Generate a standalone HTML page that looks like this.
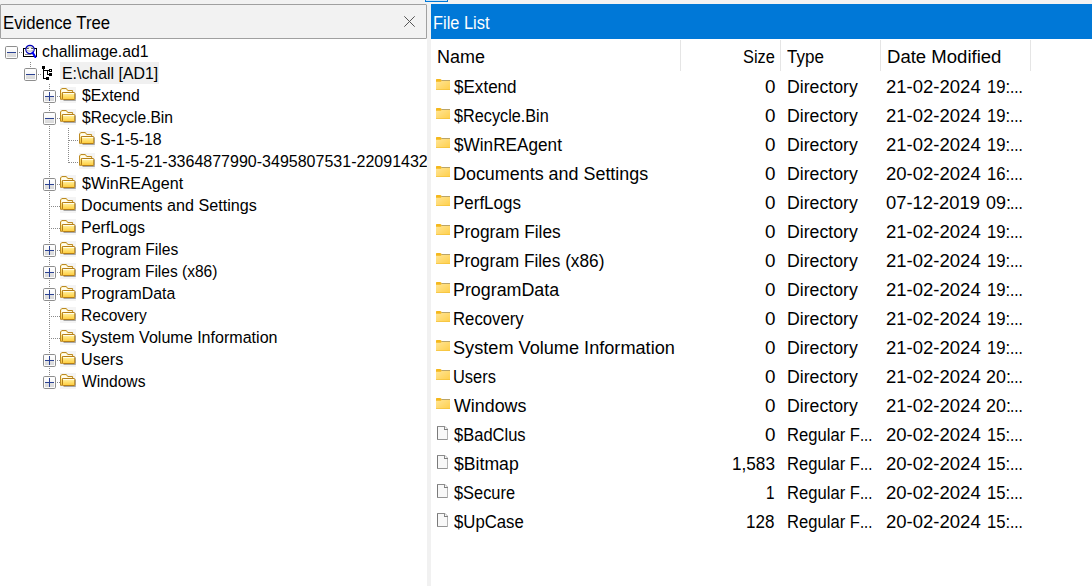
<!DOCTYPE html>
<html><head><meta charset="utf-8"><title>FTK Imager</title><style>
html,body{margin:0;padding:0}
body{width:1092px;height:586px;overflow:hidden;background:#fff;position:relative;font-family:"Liberation Sans",sans-serif}
.a{position:absolute;display:block}
.t{position:absolute;white-space:pre;line-height:24px;transform-origin:0 0}
.vd{width:1px;background:repeating-linear-gradient(to bottom,#8a8a8a 0,#8a8a8a 1px,transparent 1px,transparent 2px)}
.hd{height:1px;background:repeating-linear-gradient(to right,#8a8a8a 0,#8a8a8a 1px,transparent 1px,transparent 2px)}
.clip{position:absolute;left:0;top:0;width:427px;height:586px;overflow:hidden}
</style></head>
<body>
<svg width="0" height="0" style="position:absolute"><defs><linearGradient id="bg" x1="0" y1="0" x2="0" y2="1"><stop offset="0" stop-color="#ffffff"/><stop offset="0.5" stop-color="#f4f4f4"/><stop offset="0.5" stop-color="#e2e2e2"/><stop offset="1" stop-color="#d9d9d9"/></linearGradient><linearGradient id="fg" x1="0" y1="0" x2="0" y2="1"><stop offset="0" stop-color="#fff8c8"/><stop offset="0.3" stop-color="#ffe98a"/><stop offset="1" stop-color="#ffcb38"/></linearGradient><linearGradient id="bk" x1="0" y1="0" x2="0" y2="1"><stop offset="0" stop-color="#fff3b0"/><stop offset="1" stop-color="#f7c638"/></linearGradient><linearGradient id="lf" x1="0" y1="0" x2="1" y2="1"><stop offset="0" stop-color="#ffe596"/><stop offset="1" stop-color="#ffcf4a"/></linearGradient></defs></svg>
<div class="a" style="left:0;top:0;width:1092px;height:4px;background:#f2f2f2"></div>
<div class="a" style="left:425px;top:-6px;width:21px;height:6px;border:1px solid #0078d7;background:#cce4f7"></div>
<div class="a" style="left:0;top:4px;width:425px;height:33px;border:1px solid #a0a0a0;border-radius:1px;background:#f2f2f2"></div>
<div class="a" style="left:427px;top:4px;width:4px;height:582px;background:#f1f1f1"></div>
<svg class="a" style="left:404px;top:16px" width="11" height="11" viewBox="0 0 11 11"><path d="M0.3,0.3 L10.7,10.7 M10.7,0.3 L0.3,10.7" stroke="#555" stroke-width="1" fill="none"/></svg>
<div class="a" style="left:431px;top:4px;width:661px;height:35px;background:#0078d7"></div>
<div class="a" style="left:680px;top:40px;width:1px;height:31px;background:#e5e5e5"></div>
<div class="a" style="left:780px;top:40px;width:1px;height:31px;background:#e5e5e5"></div>
<div class="a" style="left:880px;top:40px;width:1px;height:31px;background:#e5e5e5"></div>
<div class="a" style="left:1030px;top:40px;width:1px;height:31px;background:#e5e5e5"></div>
<div class="a" style="left:60px;top:62px;width:99px;height:22px;background:#f0f0f0"></div>
<div class="a hd" style="left:19px;top:52px;width:3px"></div>
<div class="a vd" style="left:30px;top:62px;height:5px"></div>
<div class="a hd" style="left:38px;top:74px;width:3px"></div>
<div class="a vd" style="left:49px;top:84px;height:293px"></div>
<div class="a vd" style="left:68px;top:128px;height:35px"></div>
<div class="a hd" style="left:57px;top:96px;width:3px"></div>
<svg class="a" style="left:60px;top:87px" width="16" height="16" viewBox="0 0 16 16"><rect width="16" height="16" fill="#f4f4f4"/><path d="M3,6.5 H15.9 V13.3 Q15.9,13.9 15.3,13.9 H3.6 Z" fill="#5a5a5a" opacity="0.5"/><path d="M0.5,12.3 V3 L1.8,1.5 H6.3 L7.8,3.5 H12.6 V5.5 H2.5 V12.3 Z" fill="url(#bk)" stroke="#bd8a22" stroke-linejoin="round"/><path d="M1.4,3.2 L2.2,2.4 H5.9 L7.3,4.3 H11.8 V5 H2 V6 H1.4 Z" fill="#fffdf2"/><rect x="2.5" y="5.5" width="12.3" height="7" rx="0.8" fill="url(#fg)" stroke="#b67f17"/><rect x="3.2" y="6.1" width="10.9" height="0.9" fill="#fffef0"/></svg>
<svg class="a" style="left:43px;top:90px" width="13" height="13" viewBox="0 0 13 13"><rect x="0.5" y="0.5" width="12" height="12" rx="1.2" fill="#fcfcfc" stroke="#8e8e8e"/><rect x="2" y="2" width="9" height="9" fill="url(#bg)"/><rect x="2" y="6" width="9" height="1" fill="#2b4293"/><rect x="6" y="2" width="1" height="9" fill="#2b4293"/></svg>
<div class="a hd" style="left:57px;top:118px;width:3px"></div>
<svg class="a" style="left:60px;top:109px" width="16" height="16" viewBox="0 0 16 16"><rect width="16" height="16" fill="#f4f4f4"/><path d="M3,6.5 H15.9 V13.3 Q15.9,13.9 15.3,13.9 H3.6 Z" fill="#5a5a5a" opacity="0.5"/><path d="M0.5,12.3 V3 L1.8,1.5 H6.3 L7.8,3.5 H12.6 V5.5 H2.5 V12.3 Z" fill="url(#bk)" stroke="#bd8a22" stroke-linejoin="round"/><path d="M1.4,3.2 L2.2,2.4 H5.9 L7.3,4.3 H11.8 V5 H2 V6 H1.4 Z" fill="#fffdf2"/><rect x="2.5" y="5.5" width="12.3" height="7" rx="0.8" fill="url(#fg)" stroke="#b67f17"/><rect x="3.2" y="6.1" width="10.9" height="0.9" fill="#fffef0"/></svg>
<svg class="a" style="left:43px;top:112px" width="13" height="13" viewBox="0 0 13 13"><rect x="0.5" y="0.5" width="12" height="12" rx="1.2" fill="#fcfcfc" stroke="#8e8e8e"/><rect x="2" y="2" width="9" height="9" fill="url(#bg)"/><rect x="2" y="6" width="9" height="1" fill="#2b4293"/></svg>
<div class="a hd" style="left:69px;top:140px;width:9px"></div>
<svg class="a" style="left:79px;top:131px" width="16" height="16" viewBox="0 0 16 16"><rect width="16" height="16" fill="#f4f4f4"/><path d="M3,6.5 H15.9 V13.3 Q15.9,13.9 15.3,13.9 H3.6 Z" fill="#5a5a5a" opacity="0.5"/><path d="M0.5,12.3 V3 L1.8,1.5 H6.3 L7.8,3.5 H12.6 V5.5 H2.5 V12.3 Z" fill="url(#bk)" stroke="#bd8a22" stroke-linejoin="round"/><path d="M1.4,3.2 L2.2,2.4 H5.9 L7.3,4.3 H11.8 V5 H2 V6 H1.4 Z" fill="#fffdf2"/><rect x="2.5" y="5.5" width="12.3" height="7" rx="0.8" fill="url(#fg)" stroke="#b67f17"/><rect x="3.2" y="6.1" width="10.9" height="0.9" fill="#fffef0"/></svg>
<div class="a hd" style="left:69px;top:162px;width:9px"></div>
<svg class="a" style="left:79px;top:153px" width="16" height="16" viewBox="0 0 16 16"><rect width="16" height="16" fill="#f4f4f4"/><path d="M3,6.5 H15.9 V13.3 Q15.9,13.9 15.3,13.9 H3.6 Z" fill="#5a5a5a" opacity="0.5"/><path d="M0.5,12.3 V3 L1.8,1.5 H6.3 L7.8,3.5 H12.6 V5.5 H2.5 V12.3 Z" fill="url(#bk)" stroke="#bd8a22" stroke-linejoin="round"/><path d="M1.4,3.2 L2.2,2.4 H5.9 L7.3,4.3 H11.8 V5 H2 V6 H1.4 Z" fill="#fffdf2"/><rect x="2.5" y="5.5" width="12.3" height="7" rx="0.8" fill="url(#fg)" stroke="#b67f17"/><rect x="3.2" y="6.1" width="10.9" height="0.9" fill="#fffef0"/></svg>
<div class="a hd" style="left:57px;top:184px;width:3px"></div>
<svg class="a" style="left:60px;top:175px" width="16" height="16" viewBox="0 0 16 16"><rect width="16" height="16" fill="#f4f4f4"/><path d="M3,6.5 H15.9 V13.3 Q15.9,13.9 15.3,13.9 H3.6 Z" fill="#5a5a5a" opacity="0.5"/><path d="M0.5,12.3 V3 L1.8,1.5 H6.3 L7.8,3.5 H12.6 V5.5 H2.5 V12.3 Z" fill="url(#bk)" stroke="#bd8a22" stroke-linejoin="round"/><path d="M1.4,3.2 L2.2,2.4 H5.9 L7.3,4.3 H11.8 V5 H2 V6 H1.4 Z" fill="#fffdf2"/><rect x="2.5" y="5.5" width="12.3" height="7" rx="0.8" fill="url(#fg)" stroke="#b67f17"/><rect x="3.2" y="6.1" width="10.9" height="0.9" fill="#fffef0"/></svg>
<svg class="a" style="left:43px;top:178px" width="13" height="13" viewBox="0 0 13 13"><rect x="0.5" y="0.5" width="12" height="12" rx="1.2" fill="#fcfcfc" stroke="#8e8e8e"/><rect x="2" y="2" width="9" height="9" fill="url(#bg)"/><rect x="2" y="6" width="9" height="1" fill="#2b4293"/><rect x="6" y="2" width="1" height="9" fill="#2b4293"/></svg>
<div class="a hd" style="left:51px;top:206px;width:9px"></div>
<svg class="a" style="left:60px;top:197px" width="16" height="16" viewBox="0 0 16 16"><rect width="16" height="16" fill="#f4f4f4"/><path d="M3,6.5 H15.9 V13.3 Q15.9,13.9 15.3,13.9 H3.6 Z" fill="#5a5a5a" opacity="0.5"/><path d="M0.5,12.3 V3 L1.8,1.5 H6.3 L7.8,3.5 H12.6 V5.5 H2.5 V12.3 Z" fill="url(#bk)" stroke="#bd8a22" stroke-linejoin="round"/><path d="M1.4,3.2 L2.2,2.4 H5.9 L7.3,4.3 H11.8 V5 H2 V6 H1.4 Z" fill="#fffdf2"/><rect x="2.5" y="5.5" width="12.3" height="7" rx="0.8" fill="url(#fg)" stroke="#b67f17"/><rect x="3.2" y="6.1" width="10.9" height="0.9" fill="#fffef0"/></svg>
<div class="a hd" style="left:51px;top:228px;width:9px"></div>
<svg class="a" style="left:60px;top:219px" width="16" height="16" viewBox="0 0 16 16"><rect width="16" height="16" fill="#f4f4f4"/><path d="M3,6.5 H15.9 V13.3 Q15.9,13.9 15.3,13.9 H3.6 Z" fill="#5a5a5a" opacity="0.5"/><path d="M0.5,12.3 V3 L1.8,1.5 H6.3 L7.8,3.5 H12.6 V5.5 H2.5 V12.3 Z" fill="url(#bk)" stroke="#bd8a22" stroke-linejoin="round"/><path d="M1.4,3.2 L2.2,2.4 H5.9 L7.3,4.3 H11.8 V5 H2 V6 H1.4 Z" fill="#fffdf2"/><rect x="2.5" y="5.5" width="12.3" height="7" rx="0.8" fill="url(#fg)" stroke="#b67f17"/><rect x="3.2" y="6.1" width="10.9" height="0.9" fill="#fffef0"/></svg>
<div class="a hd" style="left:57px;top:250px;width:3px"></div>
<svg class="a" style="left:60px;top:241px" width="16" height="16" viewBox="0 0 16 16"><rect width="16" height="16" fill="#f4f4f4"/><path d="M3,6.5 H15.9 V13.3 Q15.9,13.9 15.3,13.9 H3.6 Z" fill="#5a5a5a" opacity="0.5"/><path d="M0.5,12.3 V3 L1.8,1.5 H6.3 L7.8,3.5 H12.6 V5.5 H2.5 V12.3 Z" fill="url(#bk)" stroke="#bd8a22" stroke-linejoin="round"/><path d="M1.4,3.2 L2.2,2.4 H5.9 L7.3,4.3 H11.8 V5 H2 V6 H1.4 Z" fill="#fffdf2"/><rect x="2.5" y="5.5" width="12.3" height="7" rx="0.8" fill="url(#fg)" stroke="#b67f17"/><rect x="3.2" y="6.1" width="10.9" height="0.9" fill="#fffef0"/></svg>
<svg class="a" style="left:43px;top:244px" width="13" height="13" viewBox="0 0 13 13"><rect x="0.5" y="0.5" width="12" height="12" rx="1.2" fill="#fcfcfc" stroke="#8e8e8e"/><rect x="2" y="2" width="9" height="9" fill="url(#bg)"/><rect x="2" y="6" width="9" height="1" fill="#2b4293"/><rect x="6" y="2" width="1" height="9" fill="#2b4293"/></svg>
<div class="a hd" style="left:57px;top:272px;width:3px"></div>
<svg class="a" style="left:60px;top:263px" width="16" height="16" viewBox="0 0 16 16"><rect width="16" height="16" fill="#f4f4f4"/><path d="M3,6.5 H15.9 V13.3 Q15.9,13.9 15.3,13.9 H3.6 Z" fill="#5a5a5a" opacity="0.5"/><path d="M0.5,12.3 V3 L1.8,1.5 H6.3 L7.8,3.5 H12.6 V5.5 H2.5 V12.3 Z" fill="url(#bk)" stroke="#bd8a22" stroke-linejoin="round"/><path d="M1.4,3.2 L2.2,2.4 H5.9 L7.3,4.3 H11.8 V5 H2 V6 H1.4 Z" fill="#fffdf2"/><rect x="2.5" y="5.5" width="12.3" height="7" rx="0.8" fill="url(#fg)" stroke="#b67f17"/><rect x="3.2" y="6.1" width="10.9" height="0.9" fill="#fffef0"/></svg>
<svg class="a" style="left:43px;top:266px" width="13" height="13" viewBox="0 0 13 13"><rect x="0.5" y="0.5" width="12" height="12" rx="1.2" fill="#fcfcfc" stroke="#8e8e8e"/><rect x="2" y="2" width="9" height="9" fill="url(#bg)"/><rect x="2" y="6" width="9" height="1" fill="#2b4293"/><rect x="6" y="2" width="1" height="9" fill="#2b4293"/></svg>
<div class="a hd" style="left:57px;top:294px;width:3px"></div>
<svg class="a" style="left:60px;top:285px" width="16" height="16" viewBox="0 0 16 16"><rect width="16" height="16" fill="#f4f4f4"/><path d="M3,6.5 H15.9 V13.3 Q15.9,13.9 15.3,13.9 H3.6 Z" fill="#5a5a5a" opacity="0.5"/><path d="M0.5,12.3 V3 L1.8,1.5 H6.3 L7.8,3.5 H12.6 V5.5 H2.5 V12.3 Z" fill="url(#bk)" stroke="#bd8a22" stroke-linejoin="round"/><path d="M1.4,3.2 L2.2,2.4 H5.9 L7.3,4.3 H11.8 V5 H2 V6 H1.4 Z" fill="#fffdf2"/><rect x="2.5" y="5.5" width="12.3" height="7" rx="0.8" fill="url(#fg)" stroke="#b67f17"/><rect x="3.2" y="6.1" width="10.9" height="0.9" fill="#fffef0"/></svg>
<svg class="a" style="left:43px;top:288px" width="13" height="13" viewBox="0 0 13 13"><rect x="0.5" y="0.5" width="12" height="12" rx="1.2" fill="#fcfcfc" stroke="#8e8e8e"/><rect x="2" y="2" width="9" height="9" fill="url(#bg)"/><rect x="2" y="6" width="9" height="1" fill="#2b4293"/><rect x="6" y="2" width="1" height="9" fill="#2b4293"/></svg>
<div class="a hd" style="left:51px;top:316px;width:9px"></div>
<svg class="a" style="left:60px;top:307px" width="16" height="16" viewBox="0 0 16 16"><rect width="16" height="16" fill="#f4f4f4"/><path d="M3,6.5 H15.9 V13.3 Q15.9,13.9 15.3,13.9 H3.6 Z" fill="#5a5a5a" opacity="0.5"/><path d="M0.5,12.3 V3 L1.8,1.5 H6.3 L7.8,3.5 H12.6 V5.5 H2.5 V12.3 Z" fill="url(#bk)" stroke="#bd8a22" stroke-linejoin="round"/><path d="M1.4,3.2 L2.2,2.4 H5.9 L7.3,4.3 H11.8 V5 H2 V6 H1.4 Z" fill="#fffdf2"/><rect x="2.5" y="5.5" width="12.3" height="7" rx="0.8" fill="url(#fg)" stroke="#b67f17"/><rect x="3.2" y="6.1" width="10.9" height="0.9" fill="#fffef0"/></svg>
<div class="a hd" style="left:51px;top:338px;width:9px"></div>
<svg class="a" style="left:60px;top:329px" width="16" height="16" viewBox="0 0 16 16"><rect width="16" height="16" fill="#f4f4f4"/><path d="M3,6.5 H15.9 V13.3 Q15.9,13.9 15.3,13.9 H3.6 Z" fill="#5a5a5a" opacity="0.5"/><path d="M0.5,12.3 V3 L1.8,1.5 H6.3 L7.8,3.5 H12.6 V5.5 H2.5 V12.3 Z" fill="url(#bk)" stroke="#bd8a22" stroke-linejoin="round"/><path d="M1.4,3.2 L2.2,2.4 H5.9 L7.3,4.3 H11.8 V5 H2 V6 H1.4 Z" fill="#fffdf2"/><rect x="2.5" y="5.5" width="12.3" height="7" rx="0.8" fill="url(#fg)" stroke="#b67f17"/><rect x="3.2" y="6.1" width="10.9" height="0.9" fill="#fffef0"/></svg>
<div class="a hd" style="left:57px;top:360px;width:3px"></div>
<svg class="a" style="left:60px;top:351px" width="16" height="16" viewBox="0 0 16 16"><rect width="16" height="16" fill="#f4f4f4"/><path d="M3,6.5 H15.9 V13.3 Q15.9,13.9 15.3,13.9 H3.6 Z" fill="#5a5a5a" opacity="0.5"/><path d="M0.5,12.3 V3 L1.8,1.5 H6.3 L7.8,3.5 H12.6 V5.5 H2.5 V12.3 Z" fill="url(#bk)" stroke="#bd8a22" stroke-linejoin="round"/><path d="M1.4,3.2 L2.2,2.4 H5.9 L7.3,4.3 H11.8 V5 H2 V6 H1.4 Z" fill="#fffdf2"/><rect x="2.5" y="5.5" width="12.3" height="7" rx="0.8" fill="url(#fg)" stroke="#b67f17"/><rect x="3.2" y="6.1" width="10.9" height="0.9" fill="#fffef0"/></svg>
<svg class="a" style="left:43px;top:354px" width="13" height="13" viewBox="0 0 13 13"><rect x="0.5" y="0.5" width="12" height="12" rx="1.2" fill="#fcfcfc" stroke="#8e8e8e"/><rect x="2" y="2" width="9" height="9" fill="url(#bg)"/><rect x="2" y="6" width="9" height="1" fill="#2b4293"/><rect x="6" y="2" width="1" height="9" fill="#2b4293"/></svg>
<div class="a hd" style="left:57px;top:382px;width:3px"></div>
<svg class="a" style="left:60px;top:373px" width="16" height="16" viewBox="0 0 16 16"><rect width="16" height="16" fill="#f4f4f4"/><path d="M3,6.5 H15.9 V13.3 Q15.9,13.9 15.3,13.9 H3.6 Z" fill="#5a5a5a" opacity="0.5"/><path d="M0.5,12.3 V3 L1.8,1.5 H6.3 L7.8,3.5 H12.6 V5.5 H2.5 V12.3 Z" fill="url(#bk)" stroke="#bd8a22" stroke-linejoin="round"/><path d="M1.4,3.2 L2.2,2.4 H5.9 L7.3,4.3 H11.8 V5 H2 V6 H1.4 Z" fill="#fffdf2"/><rect x="2.5" y="5.5" width="12.3" height="7" rx="0.8" fill="url(#fg)" stroke="#b67f17"/><rect x="3.2" y="6.1" width="10.9" height="0.9" fill="#fffef0"/></svg>
<svg class="a" style="left:43px;top:376px" width="13" height="13" viewBox="0 0 13 13"><rect x="0.5" y="0.5" width="12" height="12" rx="1.2" fill="#fcfcfc" stroke="#8e8e8e"/><rect x="2" y="2" width="9" height="9" fill="url(#bg)"/><rect x="2" y="6" width="9" height="1" fill="#2b4293"/><rect x="6" y="2" width="1" height="9" fill="#2b4293"/></svg>
<svg class="a" style="left:5px;top:46px" width="13" height="13" viewBox="0 0 13 13"><rect x="0.5" y="0.5" width="12" height="12" rx="1.2" fill="#fcfcfc" stroke="#8e8e8e"/><rect x="2" y="2" width="9" height="9" fill="url(#bg)"/><rect x="2" y="6" width="9" height="1" fill="#2b4293"/></svg>
<svg class="a" style="left:24px;top:68px" width="13" height="13" viewBox="0 0 13 13"><rect x="0.5" y="0.5" width="12" height="12" rx="1.2" fill="#fcfcfc" stroke="#8e8e8e"/><rect x="2" y="2" width="9" height="9" fill="url(#bg)"/><rect x="2" y="6" width="9" height="1" fill="#2b4293"/></svg>
<svg class="a" style="left:23px;top:44px" width="16" height="16" viewBox="0 0 16 16"><rect x="0.5" y="4.5" width="13" height="8" fill="#fff" stroke="#000"/><rect x="2" y="10" width="6.5" height="1" fill="#8a8a8a"/><circle cx="7" cy="5.5" r="4.2" fill="#fff" stroke="#0000b8" stroke-width="1.2"/><path d="M3.8,4.4 H5.8 M8.2,4.4 H10.2" stroke="#222" stroke-width="0.9" fill="none"/><path d="M4.4,3.6 Q7,1.9 9.6,3.6" fill="none" stroke="#b0b0a0" stroke-width="0.8"/><path d="M4,6.6 Q7,7.8 10,6.6" fill="none" stroke="#9a9a9a" stroke-width="0.8"/><path d="M9.6,8.6 L12.3,13" stroke="#0000f0" stroke-width="2.1" stroke-linecap="round"/></svg>
<svg class="a" style="left:42px;top:66px" width="11" height="15" viewBox="0 0 11 15" shape-rendering="crispEdges"><rect x="0" y="0" width="3" height="3" fill="#000"/><rect x="1" y="3" width="1" height="10" fill="#000"/><rect x="1" y="12" width="3" height="1" fill="#000"/><rect x="4" y="11" width="3" height="3" fill="#000"/><rect x="2" y="4" width="5" height="1" fill="#000"/><rect x="5" y="4" width="1" height="5" fill="#000"/><rect x="5" y="8" width="2" height="1" fill="#000"/><rect x="7" y="3" width="3" height="3" fill="#000"/><rect x="7" y="7" width="3" height="3" fill="#000"/><rect x="8" y="4" width="1" height="1" fill="#fff"/></svg>
<svg class="a" style="left:436px;top:79px" width="14" height="11" viewBox="0 0 14 11"><rect x="5.2" y="1" width="8.8" height="1" fill="#b9a469"/><rect x="0" y="2" width="14" height="9" fill="url(#lf)"/><rect x="0" y="10.4" width="14" height="0.6" fill="#f2be35"/><path d="M0,0.6 Q0,0 0.6,0 H4.3 Q4.8,0 5.1,0.5 L5.5,1.4 Q5.5,2.8 4.6,2.8 H0 Z" fill="#f5b81c"/></svg>
<svg class="a" style="left:436px;top:108px" width="14" height="11" viewBox="0 0 14 11"><rect x="5.2" y="1" width="8.8" height="1" fill="#b9a469"/><rect x="0" y="2" width="14" height="9" fill="url(#lf)"/><rect x="0" y="10.4" width="14" height="0.6" fill="#f2be35"/><path d="M0,0.6 Q0,0 0.6,0 H4.3 Q4.8,0 5.1,0.5 L5.5,1.4 Q5.5,2.8 4.6,2.8 H0 Z" fill="#f5b81c"/></svg>
<svg class="a" style="left:436px;top:137px" width="14" height="11" viewBox="0 0 14 11"><rect x="5.2" y="1" width="8.8" height="1" fill="#b9a469"/><rect x="0" y="2" width="14" height="9" fill="url(#lf)"/><rect x="0" y="10.4" width="14" height="0.6" fill="#f2be35"/><path d="M0,0.6 Q0,0 0.6,0 H4.3 Q4.8,0 5.1,0.5 L5.5,1.4 Q5.5,2.8 4.6,2.8 H0 Z" fill="#f5b81c"/></svg>
<svg class="a" style="left:436px;top:166px" width="14" height="11" viewBox="0 0 14 11"><rect x="5.2" y="1" width="8.8" height="1" fill="#b9a469"/><rect x="0" y="2" width="14" height="9" fill="url(#lf)"/><rect x="0" y="10.4" width="14" height="0.6" fill="#f2be35"/><path d="M0,0.6 Q0,0 0.6,0 H4.3 Q4.8,0 5.1,0.5 L5.5,1.4 Q5.5,2.8 4.6,2.8 H0 Z" fill="#f5b81c"/></svg>
<svg class="a" style="left:436px;top:195px" width="14" height="11" viewBox="0 0 14 11"><rect x="5.2" y="1" width="8.8" height="1" fill="#b9a469"/><rect x="0" y="2" width="14" height="9" fill="url(#lf)"/><rect x="0" y="10.4" width="14" height="0.6" fill="#f2be35"/><path d="M0,0.6 Q0,0 0.6,0 H4.3 Q4.8,0 5.1,0.5 L5.5,1.4 Q5.5,2.8 4.6,2.8 H0 Z" fill="#f5b81c"/></svg>
<svg class="a" style="left:436px;top:224px" width="14" height="11" viewBox="0 0 14 11"><rect x="5.2" y="1" width="8.8" height="1" fill="#b9a469"/><rect x="0" y="2" width="14" height="9" fill="url(#lf)"/><rect x="0" y="10.4" width="14" height="0.6" fill="#f2be35"/><path d="M0,0.6 Q0,0 0.6,0 H4.3 Q4.8,0 5.1,0.5 L5.5,1.4 Q5.5,2.8 4.6,2.8 H0 Z" fill="#f5b81c"/></svg>
<svg class="a" style="left:436px;top:253px" width="14" height="11" viewBox="0 0 14 11"><rect x="5.2" y="1" width="8.8" height="1" fill="#b9a469"/><rect x="0" y="2" width="14" height="9" fill="url(#lf)"/><rect x="0" y="10.4" width="14" height="0.6" fill="#f2be35"/><path d="M0,0.6 Q0,0 0.6,0 H4.3 Q4.8,0 5.1,0.5 L5.5,1.4 Q5.5,2.8 4.6,2.8 H0 Z" fill="#f5b81c"/></svg>
<svg class="a" style="left:436px;top:282px" width="14" height="11" viewBox="0 0 14 11"><rect x="5.2" y="1" width="8.8" height="1" fill="#b9a469"/><rect x="0" y="2" width="14" height="9" fill="url(#lf)"/><rect x="0" y="10.4" width="14" height="0.6" fill="#f2be35"/><path d="M0,0.6 Q0,0 0.6,0 H4.3 Q4.8,0 5.1,0.5 L5.5,1.4 Q5.5,2.8 4.6,2.8 H0 Z" fill="#f5b81c"/></svg>
<svg class="a" style="left:436px;top:311px" width="14" height="11" viewBox="0 0 14 11"><rect x="5.2" y="1" width="8.8" height="1" fill="#b9a469"/><rect x="0" y="2" width="14" height="9" fill="url(#lf)"/><rect x="0" y="10.4" width="14" height="0.6" fill="#f2be35"/><path d="M0,0.6 Q0,0 0.6,0 H4.3 Q4.8,0 5.1,0.5 L5.5,1.4 Q5.5,2.8 4.6,2.8 H0 Z" fill="#f5b81c"/></svg>
<svg class="a" style="left:436px;top:340px" width="14" height="11" viewBox="0 0 14 11"><rect x="5.2" y="1" width="8.8" height="1" fill="#b9a469"/><rect x="0" y="2" width="14" height="9" fill="url(#lf)"/><rect x="0" y="10.4" width="14" height="0.6" fill="#f2be35"/><path d="M0,0.6 Q0,0 0.6,0 H4.3 Q4.8,0 5.1,0.5 L5.5,1.4 Q5.5,2.8 4.6,2.8 H0 Z" fill="#f5b81c"/></svg>
<svg class="a" style="left:436px;top:369px" width="14" height="11" viewBox="0 0 14 11"><rect x="5.2" y="1" width="8.8" height="1" fill="#b9a469"/><rect x="0" y="2" width="14" height="9" fill="url(#lf)"/><rect x="0" y="10.4" width="14" height="0.6" fill="#f2be35"/><path d="M0,0.6 Q0,0 0.6,0 H4.3 Q4.8,0 5.1,0.5 L5.5,1.4 Q5.5,2.8 4.6,2.8 H0 Z" fill="#f5b81c"/></svg>
<svg class="a" style="left:436px;top:398px" width="14" height="11" viewBox="0 0 14 11"><rect x="5.2" y="1" width="8.8" height="1" fill="#b9a469"/><rect x="0" y="2" width="14" height="9" fill="url(#lf)"/><rect x="0" y="10.4" width="14" height="0.6" fill="#f2be35"/><path d="M0,0.6 Q0,0 0.6,0 H4.3 Q4.8,0 5.1,0.5 L5.5,1.4 Q5.5,2.8 4.6,2.8 H0 Z" fill="#f5b81c"/></svg>
<svg class="a" style="left:437px;top:426px" width="11" height="14" viewBox="0 0 11 14"><path d="M0,0 H8 L11,3 V14 H0 Z" fill="#f8f8f8"/><path d="M8,0 L11,3.4 H8 Z" fill="#fdfdfd"/><rect x="0" y="0" width="1" height="14" fill="#7a7a7a"/><rect x="0" y="0" width="8" height="1" fill="#8c8c8c"/><rect x="0" y="13" width="11" height="1" fill="#949494"/><rect x="10" y="3.5" width="1" height="10.5" fill="#b4b4b4"/><rect x="7" y="0" width="1" height="4" fill="#8a8a8a"/><rect x="7" y="3" width="4" height="1" fill="#7e7e7e"/><path d="M8,0.4 L10.7,3.2" stroke="#a8a8a8" stroke-width="0.9" fill="none"/></svg>
<svg class="a" style="left:437px;top:455px" width="11" height="14" viewBox="0 0 11 14"><path d="M0,0 H8 L11,3 V14 H0 Z" fill="#f8f8f8"/><path d="M8,0 L11,3.4 H8 Z" fill="#fdfdfd"/><rect x="0" y="0" width="1" height="14" fill="#7a7a7a"/><rect x="0" y="0" width="8" height="1" fill="#8c8c8c"/><rect x="0" y="13" width="11" height="1" fill="#949494"/><rect x="10" y="3.5" width="1" height="10.5" fill="#b4b4b4"/><rect x="7" y="0" width="1" height="4" fill="#8a8a8a"/><rect x="7" y="3" width="4" height="1" fill="#7e7e7e"/><path d="M8,0.4 L10.7,3.2" stroke="#a8a8a8" stroke-width="0.9" fill="none"/></svg>
<svg class="a" style="left:437px;top:484px" width="11" height="14" viewBox="0 0 11 14"><path d="M0,0 H8 L11,3 V14 H0 Z" fill="#f8f8f8"/><path d="M8,0 L11,3.4 H8 Z" fill="#fdfdfd"/><rect x="0" y="0" width="1" height="14" fill="#7a7a7a"/><rect x="0" y="0" width="8" height="1" fill="#8c8c8c"/><rect x="0" y="13" width="11" height="1" fill="#949494"/><rect x="10" y="3.5" width="1" height="10.5" fill="#b4b4b4"/><rect x="7" y="0" width="1" height="4" fill="#8a8a8a"/><rect x="7" y="3" width="4" height="1" fill="#7e7e7e"/><path d="M8,0.4 L10.7,3.2" stroke="#a8a8a8" stroke-width="0.9" fill="none"/></svg>
<svg class="a" style="left:437px;top:513px" width="11" height="14" viewBox="0 0 11 14"><path d="M0,0 H8 L11,3 V14 H0 Z" fill="#f8f8f8"/><path d="M8,0 L11,3.4 H8 Z" fill="#fdfdfd"/><rect x="0" y="0" width="1" height="14" fill="#7a7a7a"/><rect x="0" y="0" width="8" height="1" fill="#8c8c8c"/><rect x="0" y="13" width="11" height="1" fill="#949494"/><rect x="10" y="3.5" width="1" height="10.5" fill="#b4b4b4"/><rect x="7" y="0" width="1" height="4" fill="#8a8a8a"/><rect x="7" y="3" width="4" height="1" fill="#7e7e7e"/><path d="M8,0.4 L10.7,3.2" stroke="#a8a8a8" stroke-width="0.9" fill="none"/></svg>
<span class="t" style="left:2.54px;top:11px;font-size:17.5px;color:#000;transform:scaleX(0.9573)">Evidence Tree</span>
<span class="t" style="left:433.46px;top:11px;font-size:17.5px;color:#fff;transform:scaleX(0.9373)">File List</span>
<span class="t" style="left:436.57px;top:45px;font-size:17.5px;color:#000;transform:scaleX(1.0267)">Name</span>
<span class="t" style="left:743.36px;top:45px;font-size:17.5px;color:#000;transform:scaleX(0.9375)">Size</span>
<span class="t" style="left:787.40px;top:45px;font-size:17.5px;color:#000;transform:scaleX(0.9730)">Type</span>
<span class="t" style="left:886.54px;top:45px;font-size:17.5px;color:#000;transform:scaleX(1.0594)">Date Modified</span>
<span class="t" style="left:41.95px;top:40px;font-size:16.75px;color:#000;transform:scaleX(0.9468)">challimage.ad1</span>
<span class="t" style="left:61.75px;top:62px;font-size:16.75px;color:#000;transform:scaleX(0.9485)">E:\chall [AD1]</span>
<span class="t" style="left:81.80px;top:84px;font-size:16.75px;color:#000;transform:scaleX(0.9410)">$Extend</span>
<span class="t" style="left:81.80px;top:106px;font-size:16.75px;color:#000;transform:scaleX(0.9309)">$Recycle.Bin</span>
<span class="t" style="left:99.95px;top:128px;font-size:16.75px;color:#000;transform:scaleX(0.9453)">S-1-5-18</span>
<div class="clip"><span class="t" style="left:99.94px;top:150px;font-size:16.75px;color:#000;transform:scaleX(0.9563)">S-1-5-21-3364877990-3495807531-22091432</span></div>
<span class="t" style="left:81.80px;top:172px;font-size:16.75px;color:#000;transform:scaleX(0.9610)">$WinREAgent</span>
<span class="t" style="left:80.84px;top:194px;font-size:16.75px;color:#000;transform:scaleX(0.9635)">Documents and Settings</span>
<span class="t" style="left:80.85px;top:216px;font-size:16.75px;color:#000;transform:scaleX(0.9530)">PerfLogs</span>
<span class="t" style="left:80.87px;top:238px;font-size:16.75px;color:#000;transform:scaleX(0.9330)">Program Files</span>
<span class="t" style="left:80.87px;top:260px;font-size:16.75px;color:#000;transform:scaleX(0.9276)">Program Files (x86)</span>
<span class="t" style="left:80.85px;top:282px;font-size:16.75px;color:#000;transform:scaleX(0.9465)">ProgramData</span>
<span class="t" style="left:80.87px;top:304px;font-size:16.75px;color:#000;transform:scaleX(0.9286)">Recovery</span>
<span class="t" style="left:80.84px;top:326px;font-size:16.75px;color:#000;transform:scaleX(0.9596)">System Volume Information</span>
<span class="t" style="left:80.83px;top:348px;font-size:16.75px;color:#000;transform:scaleX(0.9667)">Users</span>
<span class="t" style="left:81.80px;top:370px;font-size:16.75px;color:#000;transform:scaleX(0.9343)">Windows</span>
<span class="t" style="left:453.90px;top:75px;font-size:17.5px;color:#000;transform:scaleX(0.9746)">$Extend</span>
<span class="t" style="left:764.52px;top:75px;font-size:17.5px;color:#000;transform:scaleX(1.0750)">0</span>
<span class="t" style="left:787.29px;top:75px;font-size:17.5px;color:#000;transform:scaleX(1.0101)">Directory</span>
<span class="t" style="left:886.44px;top:75px;font-size:17.5px;color:#000;transform:scaleX(1.0580)">21-02-2024</span>
<span class="t" style="left:987.35px;top:75px;font-size:17.5px;color:#000;transform:scaleX(0.9545)">19:</span>
<span class="t" style="left:1009.54px;top:75px;font-size:17.5px;color:#000;transform:scaleX(0.8818)">...</span>
<span class="t" style="left:453.90px;top:104px;font-size:17.5px;color:#000;transform:scaleX(0.9277)">$Recycle.Bin</span>
<span class="t" style="left:764.52px;top:104px;font-size:17.5px;color:#000;transform:scaleX(1.0750)">0</span>
<span class="t" style="left:787.29px;top:104px;font-size:17.5px;color:#000;transform:scaleX(1.0101)">Directory</span>
<span class="t" style="left:886.44px;top:104px;font-size:17.5px;color:#000;transform:scaleX(1.0580)">21-02-2024</span>
<span class="t" style="left:987.35px;top:104px;font-size:17.5px;color:#000;transform:scaleX(0.9545)">19:</span>
<span class="t" style="left:1009.54px;top:104px;font-size:17.5px;color:#000;transform:scaleX(0.8818)">...</span>
<span class="t" style="left:453.90px;top:133px;font-size:17.5px;color:#000;transform:scaleX(0.9818)">$WinREAgent</span>
<span class="t" style="left:764.52px;top:133px;font-size:17.5px;color:#000;transform:scaleX(1.0750)">0</span>
<span class="t" style="left:787.29px;top:133px;font-size:17.5px;color:#000;transform:scaleX(1.0101)">Directory</span>
<span class="t" style="left:886.44px;top:133px;font-size:17.5px;color:#000;transform:scaleX(1.0580)">21-02-2024</span>
<span class="t" style="left:987.35px;top:133px;font-size:17.5px;color:#000;transform:scaleX(0.9545)">19:</span>
<span class="t" style="left:1009.54px;top:133px;font-size:17.5px;color:#000;transform:scaleX(0.8818)">...</span>
<span class="t" style="left:452.88px;top:162px;font-size:17.5px;color:#000;transform:scaleX(1.0238)">Documents and Settings</span>
<span class="t" style="left:764.52px;top:162px;font-size:17.5px;color:#000;transform:scaleX(1.0750)">0</span>
<span class="t" style="left:787.29px;top:162px;font-size:17.5px;color:#000;transform:scaleX(1.0101)">Directory</span>
<span class="t" style="left:886.44px;top:162px;font-size:17.5px;color:#000;transform:scaleX(1.0580)">20-02-2024</span>
<span class="t" style="left:987.35px;top:162px;font-size:17.5px;color:#000;transform:scaleX(0.9545)">16:</span>
<span class="t" style="left:1009.54px;top:162px;font-size:17.5px;color:#000;transform:scaleX(0.8818)">...</span>
<span class="t" style="left:452.93px;top:191px;font-size:17.5px;color:#000;transform:scaleX(0.9696)">PerfLogs</span>
<span class="t" style="left:764.52px;top:191px;font-size:17.5px;color:#000;transform:scaleX(1.0750)">0</span>
<span class="t" style="left:787.29px;top:191px;font-size:17.5px;color:#000;transform:scaleX(1.0101)">Directory</span>
<span class="t" style="left:886.45px;top:191px;font-size:17.5px;color:#000;transform:scaleX(1.0500)">07-12-2019</span>
<span class="t" style="left:985.78px;top:191px;font-size:17.5px;color:#000;transform:scaleX(1.0227)">09:</span>
<span class="t" style="left:1009.54px;top:191px;font-size:17.5px;color:#000;transform:scaleX(0.8818)">...</span>
<span class="t" style="left:452.91px;top:220px;font-size:17.5px;color:#000;transform:scaleX(0.9889)">Program Files</span>
<span class="t" style="left:764.52px;top:220px;font-size:17.5px;color:#000;transform:scaleX(1.0750)">0</span>
<span class="t" style="left:787.29px;top:220px;font-size:17.5px;color:#000;transform:scaleX(1.0101)">Directory</span>
<span class="t" style="left:886.44px;top:220px;font-size:17.5px;color:#000;transform:scaleX(1.0580)">21-02-2024</span>
<span class="t" style="left:987.35px;top:220px;font-size:17.5px;color:#000;transform:scaleX(0.9545)">19:</span>
<span class="t" style="left:1009.54px;top:220px;font-size:17.5px;color:#000;transform:scaleX(0.8818)">...</span>
<span class="t" style="left:452.91px;top:249px;font-size:17.5px;color:#000;transform:scaleX(0.9855)">Program Files (x86)</span>
<span class="t" style="left:764.52px;top:249px;font-size:17.5px;color:#000;transform:scaleX(1.0750)">0</span>
<span class="t" style="left:787.29px;top:249px;font-size:17.5px;color:#000;transform:scaleX(1.0101)">Directory</span>
<span class="t" style="left:886.44px;top:249px;font-size:17.5px;color:#000;transform:scaleX(1.0580)">21-02-2024</span>
<span class="t" style="left:987.35px;top:249px;font-size:17.5px;color:#000;transform:scaleX(0.9545)">19:</span>
<span class="t" style="left:1009.54px;top:249px;font-size:17.5px;color:#000;transform:scaleX(0.8818)">...</span>
<span class="t" style="left:452.88px;top:278px;font-size:17.5px;color:#000;transform:scaleX(1.0204)">ProgramData</span>
<span class="t" style="left:764.52px;top:278px;font-size:17.5px;color:#000;transform:scaleX(1.0750)">0</span>
<span class="t" style="left:787.29px;top:278px;font-size:17.5px;color:#000;transform:scaleX(1.0101)">Directory</span>
<span class="t" style="left:886.44px;top:278px;font-size:17.5px;color:#000;transform:scaleX(1.0580)">21-02-2024</span>
<span class="t" style="left:987.35px;top:278px;font-size:17.5px;color:#000;transform:scaleX(0.9545)">19:</span>
<span class="t" style="left:1009.54px;top:278px;font-size:17.5px;color:#000;transform:scaleX(0.8818)">...</span>
<span class="t" style="left:452.94px;top:307px;font-size:17.5px;color:#000;transform:scaleX(0.9562)">Recovery</span>
<span class="t" style="left:764.52px;top:307px;font-size:17.5px;color:#000;transform:scaleX(1.0750)">0</span>
<span class="t" style="left:787.29px;top:307px;font-size:17.5px;color:#000;transform:scaleX(1.0101)">Directory</span>
<span class="t" style="left:886.44px;top:307px;font-size:17.5px;color:#000;transform:scaleX(1.0580)">21-02-2024</span>
<span class="t" style="left:987.35px;top:307px;font-size:17.5px;color:#000;transform:scaleX(0.9545)">19:</span>
<span class="t" style="left:1009.54px;top:307px;font-size:17.5px;color:#000;transform:scaleX(0.8818)">...</span>
<span class="t" style="left:452.86px;top:336px;font-size:17.5px;color:#000;transform:scaleX(1.0368)">System Volume Information</span>
<span class="t" style="left:764.52px;top:336px;font-size:17.5px;color:#000;transform:scaleX(1.0750)">0</span>
<span class="t" style="left:787.29px;top:336px;font-size:17.5px;color:#000;transform:scaleX(1.0101)">Directory</span>
<span class="t" style="left:886.44px;top:336px;font-size:17.5px;color:#000;transform:scaleX(1.0580)">21-02-2024</span>
<span class="t" style="left:987.35px;top:336px;font-size:17.5px;color:#000;transform:scaleX(0.9545)">19:</span>
<span class="t" style="left:1009.54px;top:336px;font-size:17.5px;color:#000;transform:scaleX(0.8818)">...</span>
<span class="t" style="left:452.96px;top:365px;font-size:17.5px;color:#000;transform:scaleX(0.9386)">Users</span>
<span class="t" style="left:764.52px;top:365px;font-size:17.5px;color:#000;transform:scaleX(1.0750)">0</span>
<span class="t" style="left:787.29px;top:365px;font-size:17.5px;color:#000;transform:scaleX(1.0101)">Directory</span>
<span class="t" style="left:886.44px;top:365px;font-size:17.5px;color:#000;transform:scaleX(1.0580)">21-02-2024</span>
<span class="t" style="left:985.78px;top:365px;font-size:17.5px;color:#000;transform:scaleX(1.0227)">20:</span>
<span class="t" style="left:1009.54px;top:365px;font-size:17.5px;color:#000;transform:scaleX(0.8818)">...</span>
<span class="t" style="left:453.90px;top:394px;font-size:17.5px;color:#000;transform:scaleX(1.0197)">Windows</span>
<span class="t" style="left:764.52px;top:394px;font-size:17.5px;color:#000;transform:scaleX(1.0750)">0</span>
<span class="t" style="left:787.29px;top:394px;font-size:17.5px;color:#000;transform:scaleX(1.0101)">Directory</span>
<span class="t" style="left:886.44px;top:394px;font-size:17.5px;color:#000;transform:scaleX(1.0580)">21-02-2024</span>
<span class="t" style="left:985.78px;top:394px;font-size:17.5px;color:#000;transform:scaleX(1.0227)">20:</span>
<span class="t" style="left:1009.54px;top:394px;font-size:17.5px;color:#000;transform:scaleX(0.8818)">...</span>
<span class="t" style="left:453.90px;top:423px;font-size:17.5px;color:#000;transform:scaleX(0.9434)">$BadClus</span>
<span class="t" style="left:764.52px;top:423px;font-size:17.5px;color:#000;transform:scaleX(1.0750)">0</span>
<span class="t" style="left:787.35px;top:423px;font-size:17.5px;color:#000;transform:scaleX(0.9493)">Regular F</span>
<span class="t" style="left:860.31px;top:423px;font-size:17.5px;color:#000;transform:scaleX(0.8455)">...</span>
<span class="t" style="left:886.44px;top:423px;font-size:17.5px;color:#000;transform:scaleX(1.0580)">20-02-2024</span>
<span class="t" style="left:987.35px;top:423px;font-size:17.5px;color:#000;transform:scaleX(0.9545)">15:</span>
<span class="t" style="left:1009.54px;top:423px;font-size:17.5px;color:#000;transform:scaleX(0.8818)">...</span>
<span class="t" style="left:453.90px;top:452px;font-size:17.5px;color:#000;transform:scaleX(1.0078)">$Bitmap</span>
<span class="t" style="left:732.02px;top:452px;font-size:17.5px;color:#000;transform:scaleX(0.9810)">1,583</span>
<span class="t" style="left:787.35px;top:452px;font-size:17.5px;color:#000;transform:scaleX(0.9493)">Regular F</span>
<span class="t" style="left:860.31px;top:452px;font-size:17.5px;color:#000;transform:scaleX(0.8455)">...</span>
<span class="t" style="left:886.44px;top:452px;font-size:17.5px;color:#000;transform:scaleX(1.0580)">20-02-2024</span>
<span class="t" style="left:987.35px;top:452px;font-size:17.5px;color:#000;transform:scaleX(0.9545)">15:</span>
<span class="t" style="left:1009.54px;top:452px;font-size:17.5px;color:#000;transform:scaleX(0.8818)">...</span>
<span class="t" style="left:453.90px;top:481px;font-size:17.5px;color:#000;transform:scaleX(0.9369)">$Secure</span>
<span class="t" style="left:766.33px;top:481px;font-size:17.5px;color:#000;transform:scaleX(0.8750)">1</span>
<span class="t" style="left:787.35px;top:481px;font-size:17.5px;color:#000;transform:scaleX(0.9493)">Regular F</span>
<span class="t" style="left:860.31px;top:481px;font-size:17.5px;color:#000;transform:scaleX(0.8455)">...</span>
<span class="t" style="left:886.44px;top:481px;font-size:17.5px;color:#000;transform:scaleX(1.0580)">20-02-2024</span>
<span class="t" style="left:987.35px;top:481px;font-size:17.5px;color:#000;transform:scaleX(0.9545)">15:</span>
<span class="t" style="left:1009.54px;top:481px;font-size:17.5px;color:#000;transform:scaleX(0.8818)">...</span>
<span class="t" style="left:453.90px;top:510px;font-size:17.5px;color:#000;transform:scaleX(0.9556)">$UpCase</span>
<span class="t" style="left:745.92px;top:510px;font-size:17.5px;color:#000;transform:scaleX(0.9750)">128</span>
<span class="t" style="left:787.35px;top:510px;font-size:17.5px;color:#000;transform:scaleX(0.9493)">Regular F</span>
<span class="t" style="left:860.31px;top:510px;font-size:17.5px;color:#000;transform:scaleX(0.8455)">...</span>
<span class="t" style="left:886.44px;top:510px;font-size:17.5px;color:#000;transform:scaleX(1.0580)">20-02-2024</span>
<span class="t" style="left:987.35px;top:510px;font-size:17.5px;color:#000;transform:scaleX(0.9545)">15:</span>
<span class="t" style="left:1009.54px;top:510px;font-size:17.5px;color:#000;transform:scaleX(0.8818)">...</span>
</body></html>
